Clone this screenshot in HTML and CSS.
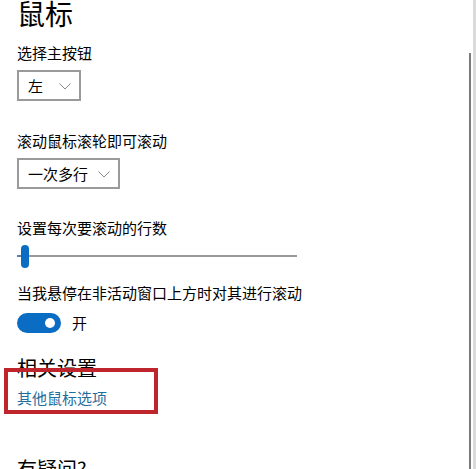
FILE: index.html
```html
<!DOCTYPE html>
<html lang="zh-CN">
<head>
<meta charset="utf-8">
<title>鼠标</title>
<link rel="stylesheet" href="styles.css">
</head>
<body>
<div class="page">
  <main class="content">
    <h1 class="title">鼠标</h1>

    <div class="label first">选择主按钮</div>
    <div class="select sel-short">
      <span>左</span>
      <svg class="chev" width="12" height="7" viewBox="0 0 12 7"><polyline points="0.5,0.5 6,6 11.5,0.5" fill="none" stroke="#8a8a8a" stroke-width="1"/></svg>
    </div>

    <div class="label gap-l">滚动鼠标滚轮即可滚动</div>
    <div class="select sel-long">
      <span>一次多行</span>
      <svg class="chev" width="12" height="7" viewBox="0 0 12 7"><polyline points="0.5,0.5 6,6 11.5,0.5" fill="none" stroke="#8a8a8a" stroke-width="1"/></svg>
    </div>

    <div class="label gap-l2">设置每次要滚动的行数</div>
    <div class="slider">
      <div class="track-fill"></div>
      <div class="thumb"></div>
      <div class="track"></div>
    </div>

    <div class="label gap-m">当我悬停在非活动窗口上方时对其进行滚动</div>
    <div class="toggle-row">
      <div class="toggle"><div class="knob"></div></div>
      <span class="toggle-text">开</span>
    </div>

    <h2 class="section">相关设置</h2>
    <a class="link" href="#">其他鼠标选项</a>

    <h2 class="section question">有疑问?</h2>
  </main>

  <div class="highlight"></div>
  <div class="scroll-thumb"></div>
  <div class="edge"></div>
</div>
</body>
</html>
```

FILE: styles.css
```css
html, body {
  margin: 0;
  padding: 0;
  background: #ffffff;
}

body {
  font-family: "Noto Sans CJK SC", "Noto Sans", sans-serif;
  color: #000;
  width: 476px;
  height: 469px;
  overflow: hidden;
}

.page {
  position: relative;
  width: 476px;
  height: 469px;
  overflow: hidden;
}

.content {
  padding-left: 17px;
  display: flex;
  flex-direction: column;
  align-items: flex-start;
}

.title {
  margin: 0;
  font-size: 28px;
  line-height: 26px;
  font-weight: 400;
}

.label {
  font-size: 15px;
  line-height: 20px;
}

.first { margin-top: 17px; }
.gap-l { margin-top: 30px; }
.gap-l2 { margin-top: 29px; }
.gap-m { margin-top: 15px; }

.select {
  margin-top: 7px;
  box-sizing: border-box;
  height: 31px;
  border: 2px solid #9a9a9a;
  display: flex;
  align-items: center;
  justify-content: space-between;
  padding: 0 8px 0 9px;
  font-size: 15px;
  line-height: 20px;
}

.sel-short { width: 64px; }
.sel-long { width: 103px; }

.chev { display: block; margin-top: 1px; }

.slider {
  margin-top: 6px;
  width: 280px;
  height: 24px;
  display: flex;
  align-items: center;
}

.track-fill {
  width: 4px;
  height: 2px;
  background: #5a7fae;
}

.thumb {
  width: 8px;
  height: 23px;
  border-radius: 4px;
  background: #0b6cc4;
}

.track {
  flex: 1;
  height: 2px;
  background: #999;
}

.toggle-row {
  margin-top: 10px;
  display: flex;
  align-items: center;
  gap: 11px;
}

.toggle {
  box-sizing: border-box;
  width: 44px;
  height: 20px;
  border-radius: 10px;
  background: #0b6cc4;
  display: flex;
  align-items: center;
  justify-content: flex-end;
  padding-right: 6px;
}

.knob {
  width: 10px;
  height: 10px;
  border-radius: 50%;
  background: #fff;
}

.toggle-text {
  font-size: 15px;
  line-height: 20px;
}

.section {
  margin: 22px 0 0 0;
  font-size: 20px;
  line-height: 26px;
  font-weight: 400;
}

.link {
  margin-top: 7px;
  font-size: 15px;
  line-height: 20px;
  color: #1f6f9c;
  text-decoration: none;
}

.question {
  margin-top: 48px;
}

.highlight {
  position: absolute;
  left: 4px;
  top: 368px;
  width: 154px;
  height: 46px;
  box-sizing: border-box;
  border: 4px solid #bf252c;
}

.scroll-thumb {
  position: absolute;
  left: 469px;
  top: 53px;
  width: 2px;
  height: 416px;
  background: #7b7b7b;
}

.edge {
  position: absolute;
  left: 473px;
  top: 0;
  width: 3px;
  height: 469px;
  background: #dadada;
}
```
